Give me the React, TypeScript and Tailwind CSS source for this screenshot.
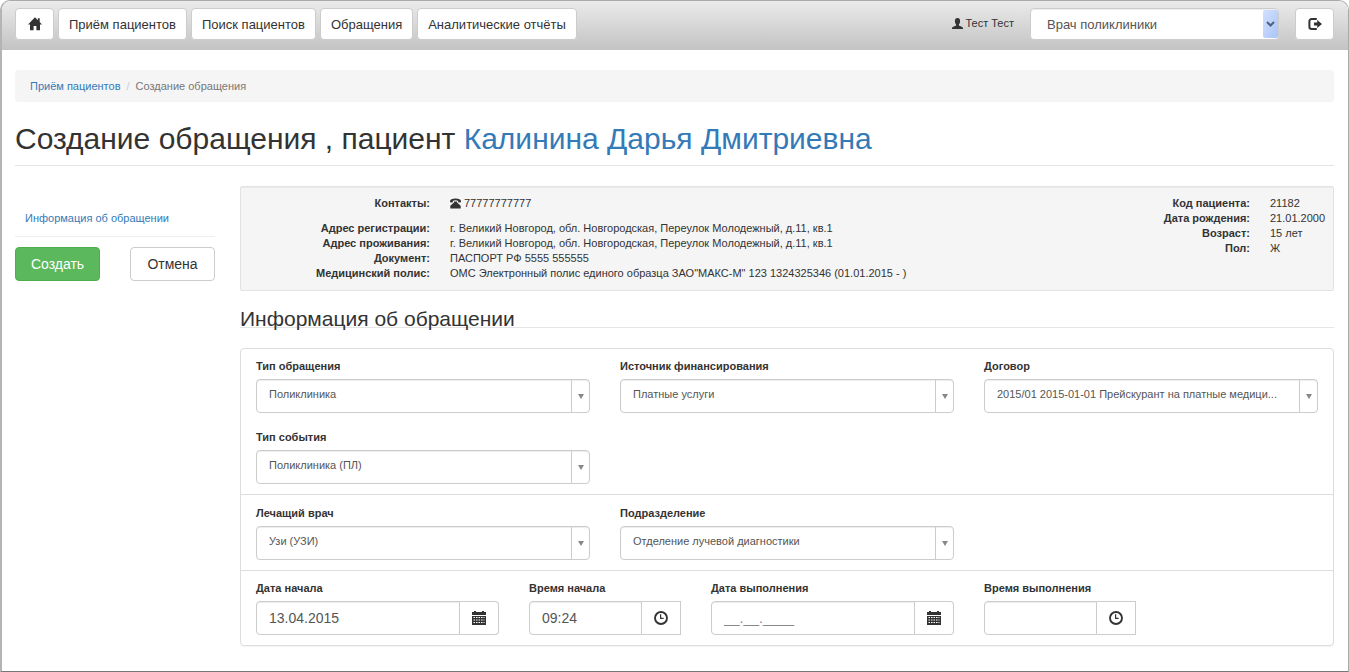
import React from 'react';

const HomeIcon = () => (
  <svg viewBox="0 0 14 14" className="h-3.5 w-3.5" fill="currentColor" aria-hidden="true">
    <path d="M7 .2 0 7.4h2v5.8h3.6V9h2.8v4.2H12V7.4h2l-2.300-2.300V1.200H9.900v2z" />
  </svg>
);

const UserIcon = () => (
  <svg viewBox="0 0 11 11" className="h-[11px] w-[11px]" fill="currentColor" aria-hidden="true">
    <path d="M5.500 0C3.700 0 2.900 1.200 2.900 2.900c0 1.300.5 2.700 1.200 3.500v.9c-.2.4-.5.500-1 .7C1.300 8.700 0 9.200 0 10.200V11h11v-.8c0-1-1.300-1.500-3.100-2.200-.5-.2-.8-.3-1-.7v-.9c.7-.8 1.200-2.200 1.200-3.500C8.100 1.200 7.300 0 5.500 0z" />
  </svg>
);

const LogoutIcon = () => (
  <svg viewBox="0 0 14 14" className="h-3.5 w-3.5" aria-hidden="true">
    <path d="M8.800 2H3.600a2.200 2.200 0 0 0-2.200 2.200v5.600A2.200 2.200 0 0 0 3.600 12h5.200" fill="none" stroke="currentColor" strokeWidth="2" />
    <path d="M9.200 3v2.600H6v2.800h3.200V11L14 7z" fill="currentColor" />
  </svg>
);

const PhoneIcon = () => (
  <svg viewBox="0 0 11 11" className="h-[11px] w-[11px]" fill="currentColor" aria-hidden="true">
    <path d="M0 3.200C0 1.500 2.300.6 5.500.6S11 1.500 11 3.200v1.100L8.200 4.600V2.900C7.500 2.500 6.500 2.300 5.500 2.300s-2 .2-2.700.6v1.700L0 4.300z" />
    <path d="M4 3.600h3v1l3.700 3.200V10.500H.3V7.800L4 4.600z" />
  </svg>
);

const CalendarIcon = () => (
  <svg viewBox="0 0 14 14" className="h-3.5 w-3.5" aria-hidden="true">
    <path d="M0 4V1h2V0h2v1h6V0h2v1h2v3z" fill="currentColor" />
    <path d="M0 5h14v9H0z" fill="currentColor" />
    <path d="M1.500 6.500h11M1.500 9h11M1.500 11.500h11" stroke="white" strokeWidth="1" strokeDasharray="1.500 1" />
  </svg>
);

const ClockIcon = () => (
  <svg viewBox="0 0 14 14" className="h-3.5 w-3.5" fill="none" stroke="currentColor" aria-hidden="true">
    <circle cx="7" cy="7" r="6" strokeWidth="1.900" />
    <path d="M6.600 3.200v4.200h3" strokeWidth="1.200" />
  </svg>
);

const navButton =
  'flex h-8 min-w-[39px] cursor-pointer items-center justify-center rounded border border-[#ccc] bg-white px-2.5 text-[13px] text-[#333] hover:bg-[#eee]';

function SelectField({ id, label, value }: { id: string; label: string; value: string }) {
  return (
    <div className="col-span-4 px-[15px]">
      <label htmlFor={id} className="mb-[5px] block font-bold">
        {label}
      </label>
      <div className="relative">
        <select
          id={id}
          className="block h-[34px] w-full appearance-none rounded border border-[#ccc] bg-white pr-8 pb-1 pl-3 text-ellipsis text-[#555] shadow-[inset_0_1px_1px_rgba(0,0,0,0.075)]"
        >
          <option>{value}</option>
        </select>
        <span className="pointer-events-none absolute inset-y-0 right-0 flex w-[19px] items-center justify-center border-l border-[#ccc]">
          <svg viewBox="0 0 6 5" className="h-[5px] w-1.5" aria-hidden="true">
            <path d="M0 0h6L3 5z" fill="#888" />
          </svg>
        </span>
      </div>
    </div>
  );
}

type PickerProps = {
  id: string;
  label: string;
  value?: string;
  placeholder?: string;
  kind: 'date' | 'time';
};

function PickerField({ id, label, value, placeholder, kind }: PickerProps) {
  return (
    <div className={kind === 'date' ? 'col-span-3 px-[15px]' : 'col-span-2 px-[15px]'}>
      <label htmlFor={id} className="mb-[5px] block font-bold">
        {label}
      </label>
      <div className="flex h-[34px]">
        <input
          id={id}
          type="text"
          defaultValue={value}
          placeholder={placeholder}
          className="min-w-0 flex-1 rounded-l border border-[#ccc] bg-white px-3 text-sm text-[#555] shadow-[inset_0_1px_1px_rgba(0,0,0,0.075)] placeholder:text-[#888]"
        />
        <button
          type="button"
          aria-label={label}
          className={
            kind === 'date'
              ? 'flex w-[39px] cursor-pointer items-center justify-center rounded-r border border-l-0 border-[#ccc] bg-white'
              : 'flex w-[39px] cursor-pointer items-center justify-center border border-l-0 border-[#ccc] bg-white'
          }
        >
          {kind === 'date' ? <CalendarIcon /> : <ClockIcon />}
        </button>
      </div>
    </div>
  );
}

const contacts = [
  ['Адрес регистрации:', 'г. Великий Новгород, обл. Новгородская, Переулок Молодежный, д.11, кв.1'],
  ['Адрес проживания:', 'г. Великий Новгород, обл. Новгородская, Переулок Молодежный, д.11, кв.1'],
  ['Документ:', 'ПАСПОРТ РФ 5555 555555'],
  ['Медицинский полис:', 'ОМС Электронный полис единого образца ЗАО"МАКС-М" 123 1324325346 (01.01.2015 - )'],
];

const person = [
  ['Код пациента:', '21182'],
  ['Дата рождения:', '21.01.2000'],
  ['Возраст:', '15 лет'],
  ['Пол:', 'Ж'],
];

export default function App() {
  return (
    <div className="flex min-h-screen flex-col overflow-hidden rounded-t-[10px] border-t border-r border-b border-l-2 border-t-[#aaa] border-r-[#aaa] border-b-[#777] border-l-[#b4b4b4] bg-white font-['Liberation_Sans',Arial,sans-serif] text-[11px] leading-[15px] text-[#333]">
      <header className="flex h-[49px] items-start bg-linear-to-b from-[#ebebeb] to-[#c3c3c3] pt-[7px] pr-3.5 pl-[13px]">
        <nav className="flex gap-1">
          <a href="#home" aria-label="Главная" className={navButton}>
            <HomeIcon />
          </a>
          <a href="#reception" className={navButton}>Приём пациентов</a>
          <a href="#search" className={navButton}>Поиск пациентов</a>
          <a href="#requests" className={navButton}>Обращения</a>
          <a href="#reports" className={navButton}>Аналитические отчёты</a>
        </nav>
        <div className="ml-auto flex">
          <span className="mr-4 flex h-[30px] items-center gap-0.5">
            <UserIcon />
            Тест Тест
          </span>
          <div className="relative mr-4">
            <select
              aria-label="Роль"
              className="block h-8 w-[249px] appearance-none rounded border border-[#ccc] bg-white pr-6 pl-4 text-[13px] text-[#555] shadow-[inset_0_1px_1px_rgba(0,0,0,0.075)]"
            >
              <option>Врач поликлиники</option>
            </select>
            <span className="pointer-events-none absolute inset-y-0.5 right-px flex w-[15px] items-center justify-center rounded-xs bg-linear-to-br from-[#d3e0fd] to-[#a9c5f8]">
              <svg viewBox="0 0 9 6" className="h-1.5 w-[9px]" aria-hidden="true">
                <path d="m1 1 3.500 3.500L8 1" fill="none" stroke="#4d6185" strokeWidth="2" />
              </svg>
            </span>
          </div>
          <button type="button" aria-label="Выход" className={navButton}>
            <LogoutIcon />
          </button>
        </div>
      </header>

      <main className="pt-5 pr-3.5 pb-6 pl-[13px]">
        <ol className="flex rounded bg-[#f5f5f5] px-[15px] py-2 leading-4">
          <li>
            <a href="#reception" className="text-[#337ab7]">Приём пациентов</a>
          </li>
          <li className="text-[#777]">
            <span className="px-1.5 text-[#ccc]">/</span>
            Создание обращения
          </li>
        </ol>

        <h1 className="mt-5 border-b border-[#e5e5e5] pb-2.5 text-[30px] leading-[33px]">
          Создание обращения , пациент{' '}
          <a href="#patient" className="text-[#337ab7]">Калинина Дарья Дмитриевна</a>
        </h1>

        <div className="mt-5 flex gap-[25px]">
          <aside className="w-[200px] shrink-0">
            <div className="border-b border-[#eee] px-2.5 pt-[25px] pb-2.5">
              <a href="#info" className="text-[#337ab7]">Информация об обращении</a>
            </div>
            <div className="mt-2.5 flex justify-between">
              <button type="button" className="h-[34px] w-[85px] cursor-pointer rounded border border-[#4cae4c] bg-[#5cb85c] text-sm text-white">
                Создать
              </button>
              <button type="button" className="h-[34px] w-[85px] cursor-pointer rounded border border-[#ccc] bg-white text-sm">
                Отмена
              </button>
            </div>
          </aside>

          <div className="min-w-0 flex-1">
            <section className="flex min-h-[105px] justify-between rounded-xs border border-[#e3e3e3] bg-[#f5f5f5] py-[9px] pr-[9px] shadow-[inset_0_1px_1px_rgba(0,0,0,0.05)]">
              <dl>
                <div className="mb-2.5 flex gap-5">
                  <dt className="w-[189px] text-right font-bold">Контакты:</dt>
                  <dd className="flex items-center gap-[3px]">
                    <PhoneIcon />
                    77777777777
                  </dd>
                </div>
                {contacts.map(([term, text]) => (
                  <div key={term} className="flex gap-5">
                    <dt className="w-[189px] text-right font-bold">{term}</dt>
                    <dd>{text}</dd>
                  </div>
                ))}
              </dl>
              <dl>
                {person.map(([term, text]) => (
                  <div key={term} className="flex gap-5">
                    <dt className="w-[100px] text-right font-bold">{term}</dt>
                    <dd className="w-[54px]">{text}</dd>
                  </div>
                ))}
              </dl>
            </section>

            <h2 className="mt-5 border-b border-[#e5e5e5] text-[21px] leading-4">Информация об обращении</h2>

            <form className="mt-5 divide-y divide-[#ddd] rounded border border-[#ddd] shadow-[0_1px_1px_rgba(0,0,0,0.05)]">
              <div className="grid grid-cols-12 gap-y-[17px] py-2.5">
                <SelectField id="type" label="Тип обращения" value="Поликлиника" />
                <SelectField id="source" label="Источник финансирования" value="Платные услуги" />
                <SelectField id="contract" label="Договор" value="2015/01 2015-01-01 Прейскурант на платные медици..." />
                <SelectField id="event" label="Тип события" value="Поликлиника (ПЛ)" />
              </div>
              <div className="grid grid-cols-12 pt-[11px] pb-2.5">
                <SelectField id="doctor" label="Лечащий врач" value="Узи (УЗИ)" />
                <SelectField id="department" label="Подразделение" value="Отделение лучевой диагностики" />
              </div>
              <div className="grid grid-cols-12 py-2.5">
                <PickerField id="start-date" label="Дата начала" value="13.04.2015" kind="date" />
                <PickerField id="start-time" label="Время начала" value="09:24" kind="time" />
                <PickerField id="end-date" label="Дата выполнения" placeholder="__.__.____" kind="date" />
                <PickerField id="end-time" label="Время выполнения" kind="time" />
              </div>
            </form>
          </div>
        </div>
      </main>
    </div>
  );
}
